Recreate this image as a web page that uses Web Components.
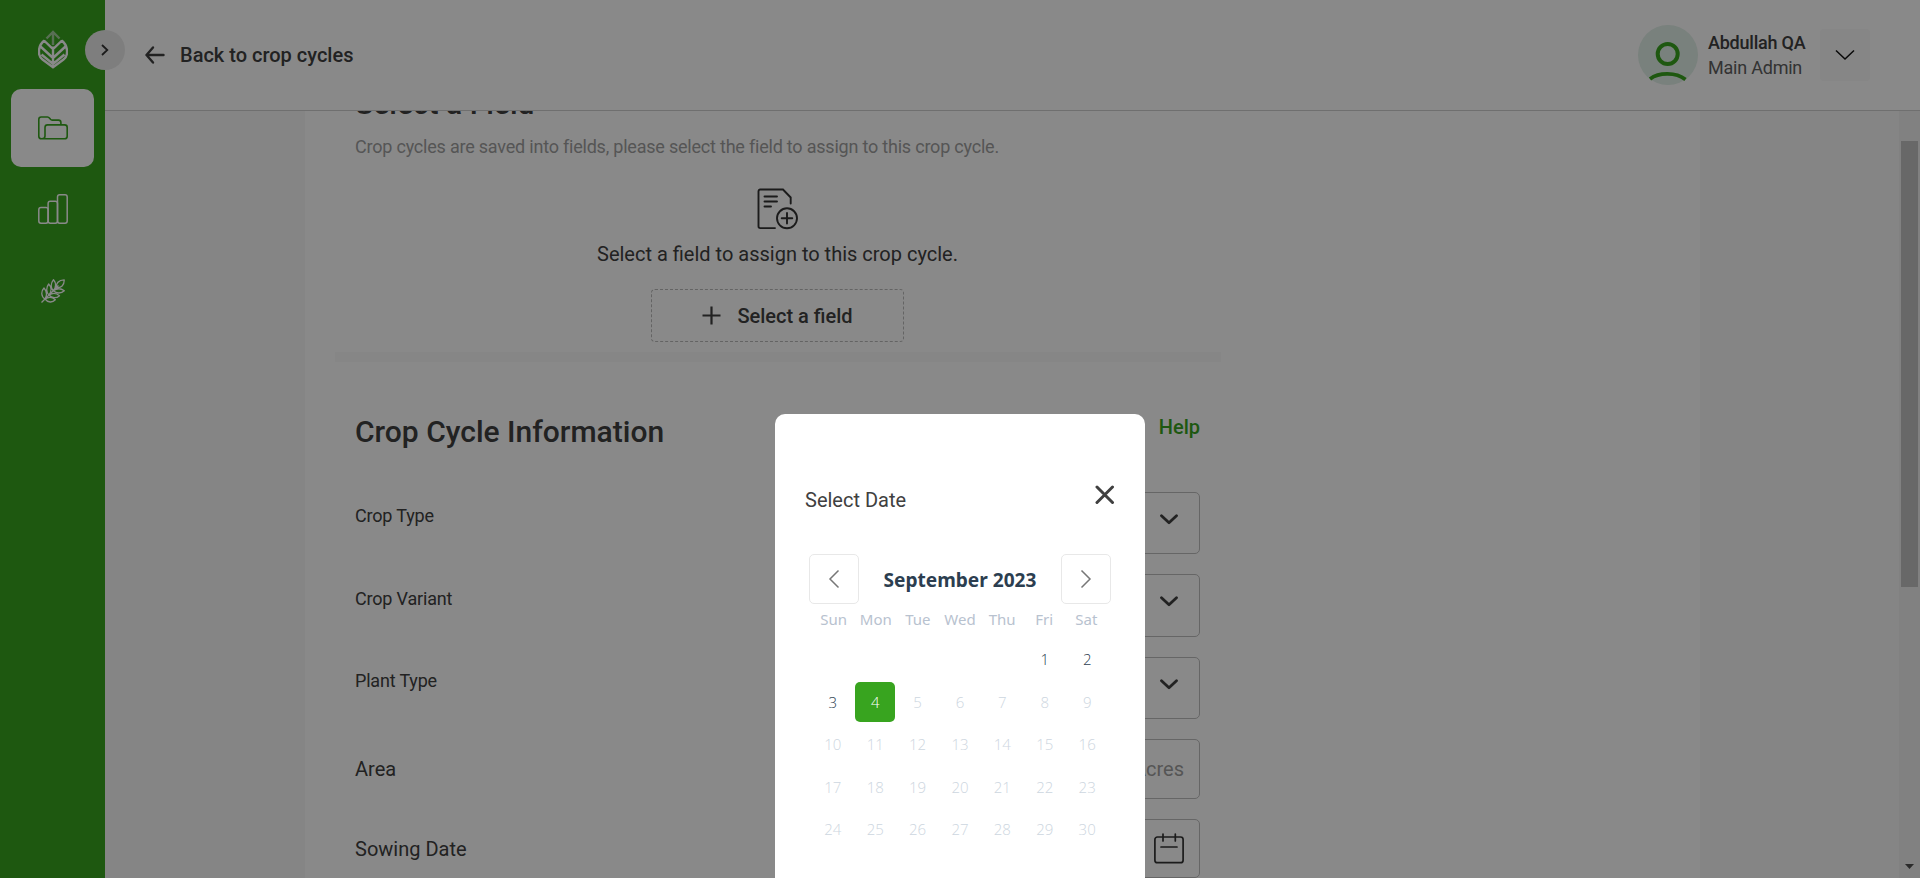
<!DOCTYPE html>
<html lang="en">
<head>
<meta charset="utf-8">
<title>Crop cycles</title>
<style>
html,body{margin:0;height:100%;overflow:hidden}
body{font-family:Roboto,"Liberation Sans",sans-serif;color:#404040;background:#fff}
</style>
</head>
<body>
<crop-app></crop-app>
<script>
const define = (name, html, setup) => customElements.define(name, class extends HTMLElement {
  connectedCallback() {
    if (this.shadowRoot) return;
    const t = document.createElement('template');
    t.innerHTML = typeof html === 'function' ? html(this) : html;
    this.attachShadow({mode: 'open'}).append(t.content.cloneNode(true));
    if (setup) setup(this);
  }
});

define('side-bar', `
<style>
:host{display:flex;flex-direction:column;align-items:center;width:105px;box-sizing:border-box;background:#38a41f;padding-top:30px;position:relative}
svg{display:block;fill:none}
.logo{width:30px;height:40px;margin-left:1px}
.tile{width:83px;height:78px;border-radius:10px;display:grid;place-items:center;color:#fff}
.tile svg{margin-left:1px}
.active{background:#fff;color:#38a41f;margin-top:19px}
.chart{margin-top:3px}
.grain{margin-top:4px}
.toggle{position:absolute;left:85px;top:30px;width:40px;height:40px;border-radius:50%;background:#ebebeb;display:grid;place-items:center;z-index:2}
</style>
<svg class="logo" viewBox="0 0 30 40" stroke="#fff" stroke-width="2.6">
 <g stroke="#a5cf9d" stroke-width="2.4"><path d="M15 15V3M8.500 8.500 15 2l6.500 6.500"/></g>
 <path d="M6.300 10.500C-.5 16-.5 26 4.500 29.500L15 37.300l10.500-7.800c5-3.500 5-13.500-1.800-19M15 16.500V37M6 10.500l9 8.500 9-8.500M2.500 16.500 15 28l12.500-11.500M3.500 24.500l11.500 9.500 11.500-9.500" stroke-width="2.400"/>
</svg>
<div class="tile active"><svg width="30" height="24" viewBox="0 0 30 24" stroke="currentColor" stroke-width="1.600"><path d="M7 22.800H3.500C1.800 22.800.8 21.800.8 20.200V3.400C.8 1.900 1.700 1 3.200 1H9.500C10.500 1 11 1.400 11.600 2.200L12.300 3.100C12.800 3.800 13.400 4.100 14.300 4.100H20.500C22 4.100 22.900 5 22.900 6.500V8.900M4 22.800C5.800 22.800 7 21.600 7 20V11.500C7 9.800 8 8.900 9.500 8.900H26.600C28.200 8.900 29.200 9.800 29.200 11.400V20.200C29.200 21.800 28.200 22.800 26.600 22.800H4"/></svg></div>
<div class="tile chart"><svg width="30" height="30" viewBox="0 0 30 30" stroke="currentColor" stroke-width="1.500"><rect x=".8" y="13.500" width="9.300" height="15.700" rx="2.200"/><rect x="10.100" y="7.200" width="9.400" height="22" rx="2.200"/><rect x="19.500" y=".8" width="9.700" height="28.400" rx="2.200"/></svg></div>
<div class="tile grain"><svg width="24" height="24" viewBox="0 0 24 24" stroke="currentColor" stroke-width="1.300" stroke-linejoin="round"><path d="M.5 23.500 17.500 6.500M15.600 8.400C14.800 4.500 17.500 1 23.200.8c.2 5.500-3.200 8.500-7.600 7.600M4 20C.2 18-.3 12.500 3 9c3 3.300 3.300 7 1 11M8 16C5.300 13.500 4.800 8.800 7.700 5c2.800 3 3 7.500.3 11M12.300 11.700C9.500 9 9.500 4.500 12.500.7c2.700 3 2.900 7.500-.2 11M4 20c3.500-2.300 7.500-2 10.300.8C11.500 23.800 7 23.900 4 20M8 16c3.300-2.200 7.500-2 10.500.7-3 2.800-7.500 2.800-10.500-.7M12.300 11.700c3.500-2.400 8-2.200 11 0-3 3-7.800 3.100-11 0"/></svg></div>
<div class="toggle"><svg width="40" height="40" stroke="#333" stroke-width="1.800"><path d="m17 15 5.300 5-5.300 5"/></svg></div>
`);

define('top-bar', `
<style>
:host{display:flex;align-items:center;height:110px;background:#fff;border-bottom:1px solid #cfcfcf;padding:0 50px 0 39px}
svg{display:block;fill:none}
.title{font-weight:500;font-size:20px;line-height:24px;margin-left:15px;flex:1}
.avatar{margin-right:10px}
.who{width:112px;font-size:18px;line-height:25px;white-space:nowrap;letter-spacing:-.22px;color:#606060}
.who b{display:block;font-weight:500;color:#404040}
.menu{width:50px;height:52px;border-radius:4px;background:#f9f9f9;display:grid;place-items:center}
</style>
<svg width="21" height="20" viewBox="0 0 21 20" stroke="#404040" stroke-width="2.400" stroke-linecap="round" stroke-linejoin="round"><path d="M19.500 10H2.500M9 2.500 2.500 10 9 17.500"/></svg>
<div class="title">Back to crop cycles</div>
<svg class="avatar" width="60" height="60" viewBox="0 0 60 60"><circle cx="30" cy="30" r="30" fill="#e1f0e8"/><circle cx="29.700" cy="29" r="10" stroke="#38a41f" stroke-width="4"/><path d="M12 54C21 47.200 38 47.200 47.500 54.500" stroke="#38a41f" stroke-width="3.800"/></svg>
<div class="who"><b>Abdullah QA</b>Main Admin</div>
<div class="menu"><svg width="20" height="12" viewBox="0 0 20 12" stroke="#111" stroke-width="1.500"><path d="m1 1.500 9 8.500 9-8.500"/></svg></div>
`);

define('form-row', el => `
<style>
:host{display:grid;grid-template-columns:1fr 400px;align-items:start}
.label{line-height:24px;padding-top:var(--label-top,12px);font-size:var(--label-size,18px);letter-spacing:var(--label-spacing,-.18px)}
.control{box-sizing:border-box;height:var(--control-height,62px);border:1px solid #bebebe;border-radius:5px;display:flex;justify-content:flex-end;align-items:center}
</style>
<div class="label">${el.getAttribute('label')}</div><div class="control"><slot></slot></div>`);

define('chevron-icon', `<style>:host{display:block;margin:0 21px 8px 0}svg{display:block}</style>
<svg width="18" height="11" viewBox="0 0 18 11" fill="none" stroke="#404040" stroke-width="2.800" stroke-linecap="round" stroke-linejoin="round"><path d="m1.500 1.700 7.500 7 7.500-7"/></svg>`);

define('crop-form', `
<style>
:host{display:block;box-sizing:border-box;width:1395px;background:#fff;padding-left:50px;overflow:hidden}
.col{width:845px}
svg{display:block;fill:none}
h2{margin:0;font-weight:500;font-size:30px;line-height:36px}
.first{margin-top:-25px}
.hint{font-size:18px;line-height:24px;color:#9f9f9f;margin-top:13px;white-space:nowrap;letter-spacing:-.21px}
.pick{display:flex;flex-direction:column;align-items:center}
.pick svg.doc{margin:29px 0 0 1px}
.pick p{margin:12px 0 0;font-size:20px;line-height:24px;white-space:nowrap}
.add{box-sizing:border-box;width:253px;height:53px;margin-top:23px;border:1px dashed #bababa;border-radius:4px;display:flex;align-items:center;justify-content:center;gap:16px;font-weight:500;font-size:20px}
.rule{width:886px;height:10px;background:#f9f9f9;margin:10px 0 0 -20px}
.head{display:flex;justify-content:space-between;margin-top:52px;height:36px}
.help{color:#38a41f;font-weight:500;font-size:20px;line-height:24px;margin-top:1px}
.unit{color:#9f9f9f;font-size:20px;margin-right:15px}
.big{--label-size:20px;--label-spacing:0}
</style>
<div class="col">
 <h2 class="first">Select a Field</h2>
 <div class="hint">Crop cycles are saved into fields, please select the field to assign to this crop cycle.</div>
 <div class="pick">
  <svg class="doc" width="42" height="42" viewBox="0 0 42 42" stroke="#333" stroke-width="1.900" stroke-linecap="round"><path d="M18 40.100H3.200C2 40.100 1.500 39.500 1.500 38.300V3.500C1.500 2.300 2 1.500 3.200 1.500H26L33.700 9.500V15.500M7.500 8.500H20M7.500 13.500H20M7.500 18.500H14"/><circle cx="30" cy="30.300" r="10"/><path d="M30 25v10.600M24.700 30.300h10.600"/></svg>
  <p>Select a field to assign to this crop cycle.</p>
  <div class="add"><svg width="19" height="19" stroke="#404040" stroke-width="2.200"><path d="M9.500.5v18M.5 9.500h18"/></svg>Select a field</div>
 </div>
 <div class="rule"></div>
 <div class="head"><h2>Crop Cycle Information</h2><span class="help">Help</span></div>
 <form-row label="Crop Type" style="margin-top:42px"><chevron-icon></chevron-icon></form-row>
 <form-row label="Crop Variant" style="margin-top:20px;--control-height:63px;--label-top:13px"><chevron-icon></chevron-icon></form-row>
 <form-row label="Plant Type" style="margin-top:20px"><chevron-icon></chevron-icon></form-row>
 <form-row class="big" label="Area" style="margin-top:20px;--control-height:60px;--label-top:18px"><span class="unit">Acres</span></form-row>
 <form-row class="big" label="Sowing Date" style="margin-top:20px;--control-height:59px;--label-top:18px"><svg style="margin-right:15px" width="30" height="31" viewBox="0 0 30 31" stroke="#333" stroke-width="1.700" stroke-linecap="round"><rect x=".9" y="4" width="28.200" height="25.700" rx="2.500"/><path d="M9 1v7M21.300 1v7M7 14h16"/></svg></form-row>
</div>`);

define('scroll-bar', `
<style>:host{display:flex;flex-direction:column;align-items:center;width:21px;background:#f1f1f1;height:100%}
.thumb{width:17px;height:446px;background:#c1c1c1;margin-top:30px}
svg{margin-top:auto;margin-bottom:9px;display:block}</style>
<div class="thumb"></div><svg width="9" height="5"><path d="M0 0h9L4.500 5z" fill="#505050"/></svg>`);

define('date-dialog', `
<style>
:host{display:block;box-sizing:border-box;width:370px;height:464px;background:#fff;border-radius:10px 10px 0 0;padding:0 30px;font-family:"Open Sans","Noto Sans",sans-serif}
svg{display:block;fill:none}
.bar{display:flex;justify-content:space-between;padding-top:70px;height:70px;box-sizing:content-box}
.name{font:20px/24px Roboto,sans-serif;padding-top:4px}
.bar svg{margin:1px 0 0}
.nav{display:flex;justify-content:space-between;align-items:center;margin:0 4px}
.btn{box-sizing:border-box;width:50px;height:50px;border:1px solid #e8e8e8;border-radius:5px;display:grid;place-items:center}
.month{font-family:"Noto Sans",sans-serif;font-weight:700;font-size:19.100px;color:#2c3e50;margin-top:2px}
.week,.days{display:grid;grid-template-columns:repeat(7,42.400px);justify-content:center;justify-items:center;align-items:center}
.week{grid-template-columns:repeat(7,42.100px);font:15px/20px "Noto Sans",sans-serif;color:#b8c2cf;margin-top:5px}
.days{grid-auto-rows:42.500px;font:300 15px/20px "Open Sans",sans-serif;color:#cdd6e0;margin-top:9px}
.days span{width:40px;height:40px;line-height:40px;text-align:center;border-radius:5px}
.days .on{color:#2c3e50}
.days .sel{background:#38a41f;color:#fff}
</style>
<div class="bar"><div class="name">Select Date</div><svg width="20" height="20" stroke="#404040" stroke-width="3" stroke-linecap="round"><path d="m2 2 15.500 15.500M17.500 2 2 17.500"/></svg></div>
<div class="nav"><div class="btn"><svg width="12" height="20" stroke="#777" stroke-width="1.500"><path d="m10.500 1.500-8.500 8.500 8.500 8.500"/></svg></div><div class="month">September 2023</div><div class="btn"><svg width="12" height="20" stroke="#777" stroke-width="1.500"><path d="m1.500 1.500 8.500 8.500-8.500 8.500"/></svg></div></div>
<div class="week"></div><div class="days"></div>`, el => {
  const add = (box, text, cls = '') => {
    const s = document.createElement('span');
    s.textContent = text; s.className = cls;
    el.shadowRoot.querySelector(box).append(s);
  };
  ['Sun','Mon','Tue','Wed','Thu','Fri','Sat'].forEach(d => add('.week', d));
  for (let i = 0; i < 5; i++) add('.days', '');
  for (let d = 1; d <= 30; d++) add('.days', d, d < 4 ? 'on' : d === 4 ? 'sel' : '');
});

define('crop-app', `
<style>
:host{display:grid;grid-template-columns:105px 1fr;width:1920px;height:878px;overflow:hidden;position:relative}
main{display:grid;grid-template-rows:111px 1fr;min-width:0;min-height:0}
.body{display:grid;grid-template-columns:200px 1395px 1fr 21px;background:#f7f7f7;min-height:0;overflow:hidden;height:767px}
.body crop-form{grid-column:2}
.overlay{position:absolute;inset:0;background:rgba(0,0,0,.462);display:flex;align-items:flex-end;padding-left:775px;z-index:5}
</style>
<side-bar></side-bar>
<main><top-bar></top-bar><div class="body"><crop-form></crop-form><span></span><scroll-bar></scroll-bar></div></main>
<div class="overlay"><date-dialog></date-dialog></div>`);
</script>
</body>
</html>
